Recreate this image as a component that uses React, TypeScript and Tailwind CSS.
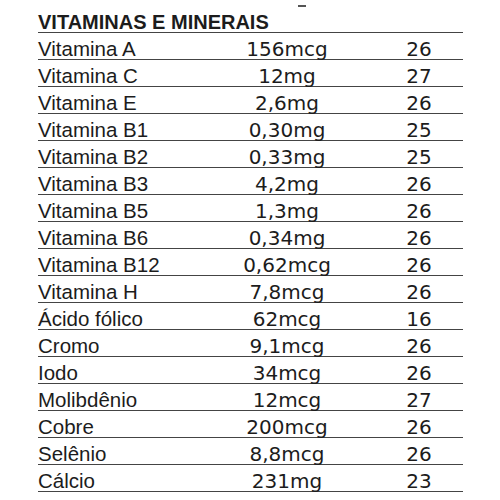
import React from "react";

const rows: [string, string, string][] = [
  ["Vitamina A", "156mcg", "26"],
  ["Vitamina C", "12mg", "27"],
  ["Vitamina E", "2,6mg", "26"],
  ["Vitamina B1", "0,30mg", "25"],
  ["Vitamina B2", "0,33mg", "25"],
  ["Vitamina B3", "4,2mg", "26"],
  ["Vitamina B5", "1,3mg", "26"],
  ["Vitamina B6", "0,34mg", "26"],
  ["Vitamina B12", "0,62mcg", "26"],
  ["Vitamina H", "7,8mcg", "26"],
  ["Ácido fólico", "62mcg", "16"],
  ["Cromo", "9,1mcg", "26"],
  ["Iodo", "34mcg", "26"],
  ["Molibdênio", "12mcg", "27"],
  ["Cobre", "200mcg", "26"],
  ["Selênio", "8,8mcg", "26"],
  ["Cálcio", "231mg", "23"],
];

const num = { fontFamily: '"DejaVu Sans", "Liberation Sans", sans-serif' };

export default function App() {
  return (
    <div
      className="relative w-[500px] h-[500px] bg-white text-[#1c1c1c] overflow-hidden"
      style={{ fontFamily: '"Liberation Sans", Arial, sans-serif' }}
    >
      <div className="absolute left-[298px] top-[5px] w-[8px] h-[2px] bg-[#555]" />
      <div className="ml-[38px] w-[425px]">
        <div className="h-[33px] flex items-end border-b-[1.5px] border-[#444] text-[20px] leading-none font-bold">
          VITAMINAS E MINERAIS
        </div>
        {rows.map(([n, v, p]) => (
          <div
            key={n}
            className="h-[27px] grid grid-cols-[161px_176px_88px] items-end border-b-[1.5px] border-[#444] text-[20px] leading-none"
          >
            <span className="text-[20.5px]">{n}</span>
            <span className="text-center" style={num}>{v}</span>
            <span className="text-center" style={num}>{p}</span>
          </div>
        ))}
      </div>
    </div>
  );
}
